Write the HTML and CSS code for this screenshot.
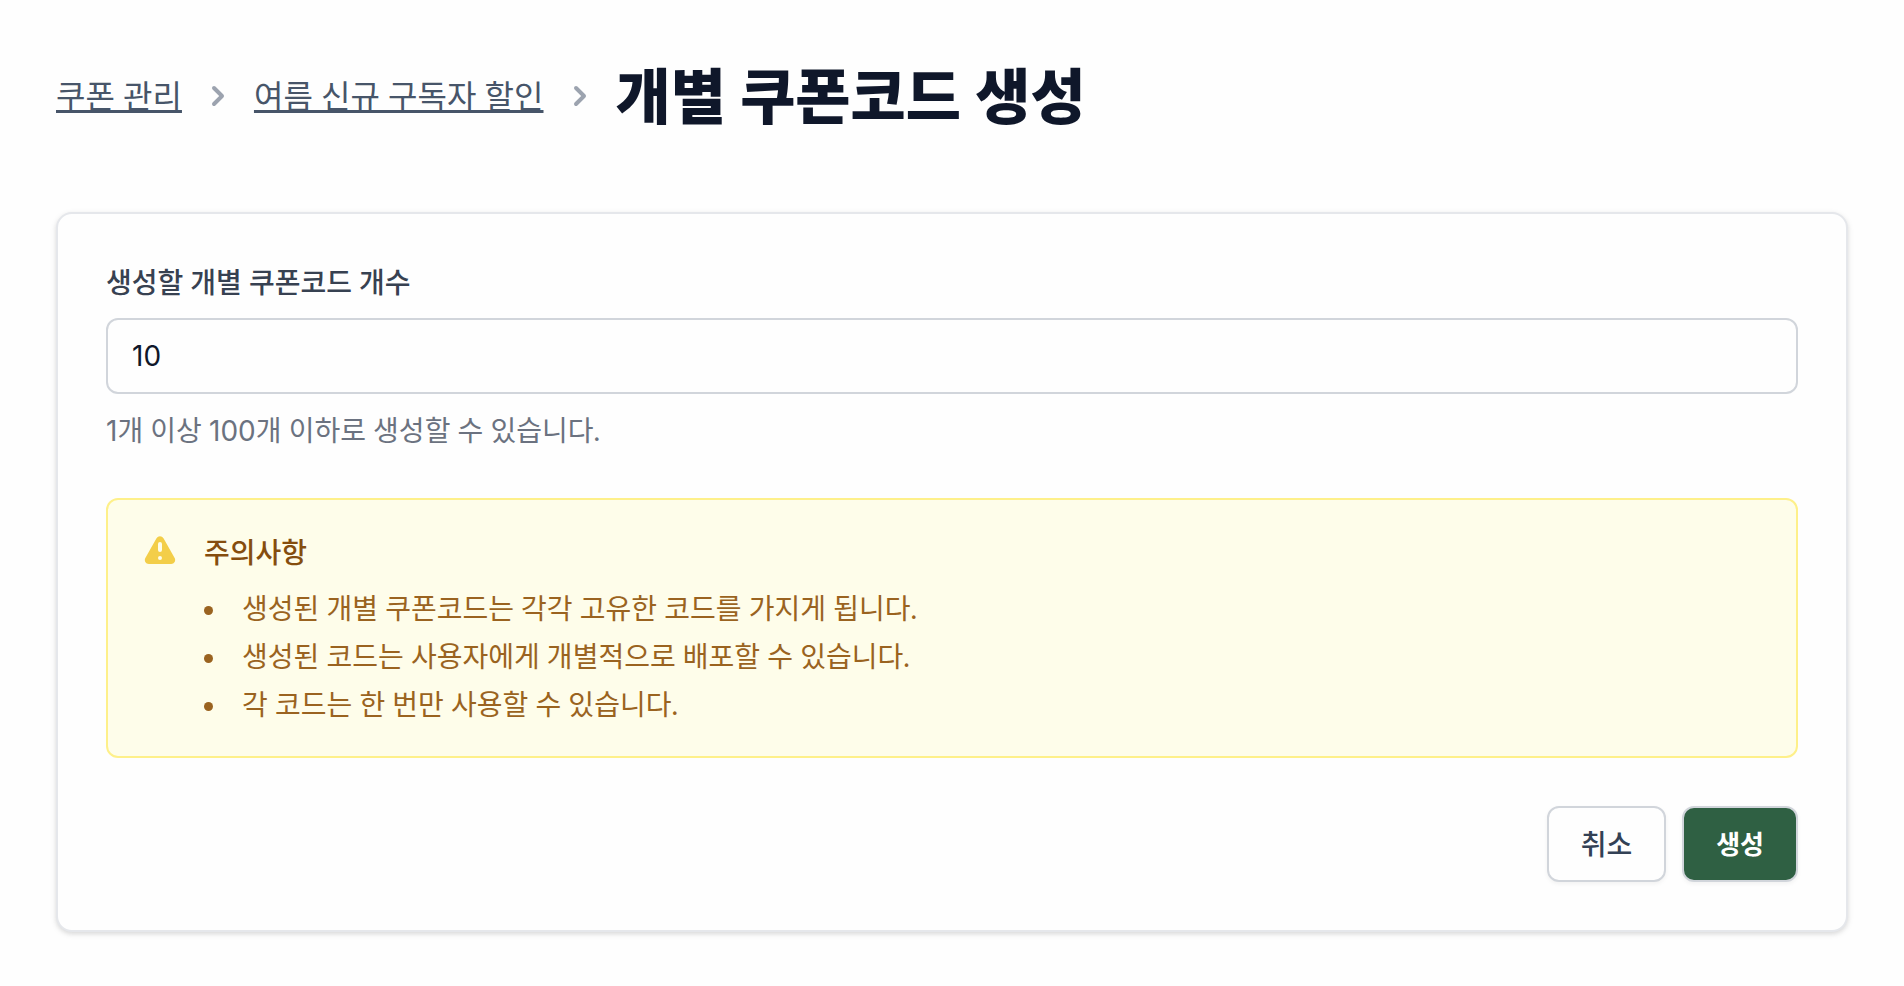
FILE: index.html
```html
<!DOCTYPE html>
<html lang="ko">
  <head>
    <meta charset="UTF-8" />
    <meta name="viewport" content="width=device-width, initial-scale=1.0" />
    <title>개별 쿠폰코드 생성</title>
    <link rel="stylesheet" href="styles.css">
  </head>
  <body>
    <main class="page">
      <header class="page-header">
        <nav class="breadcrumb" aria-label="breadcrumb">
          <a href="#">쿠폰 관리</a>
          <svg class="chevron" viewBox="0 0 20 20" fill="currentColor" aria-hidden="true">
            <path fill-rule="evenodd" clip-rule="evenodd" d="M7.293 14.707a1 1 0 010-1.414L10.586 10 7.293 6.707a1 1 0 011.414-1.414l4 4a1 1 0 010 1.414l-4 4a1 1 0 01-1.414 0z" />
          </svg>
          <a href="#">여름 신규 구독자 할인</a>
          <svg class="chevron" viewBox="0 0 20 20" fill="currentColor" aria-hidden="true">
            <path fill-rule="evenodd" clip-rule="evenodd" d="M7.293 14.707a1 1 0 010-1.414L10.586 10 7.293 6.707a1 1 0 011.414-1.414l4 4a1 1 0 010 1.414l-4 4a1 1 0 01-1.414 0z" />
          </svg>
        </nav>
        <h1>개별 쿠폰코드 생성</h1>
      </header>

      <form class="card">
        <div class="field">
          <label for="count">생성할 개별 쿠폰코드 개수</label>
          <input type="number" id="count" name="count" min="1" max="100" value="10" aria-describedby="count-help" />
          <p class="help" id="count-help"><span class="num">1</span>개 이상 <span class="num">100</span>개 이하로 생성할 수 있습니다.</p>
        </div>

        <div class="notice">
          <svg class="notice-icon" viewBox="0 0 20 20" fill="currentColor" aria-hidden="true">
            <path fill-rule="evenodd" clip-rule="evenodd" d="M8.257 3.099c.765-1.36 2.722-1.36 3.486 0l5.58 9.92c.75 1.334-.213 2.98-1.742 2.98H4.42c-1.53 0-2.493-1.646-1.743-2.98l5.58-9.92zM11 13a1 1 0 11-2 0 1 1 0 012 0zm-1-8a1 1 0 00-1 1v3a1 1 0 002 0V6a1 1 0 00-1-1z" />
          </svg>
          <div>
            <h2>주의사항</h2>
            <ul>
              <li>생성된 개별 쿠폰코드는 각각 고유한 코드를 가지게 됩니다.</li>
              <li>생성된 코드는 사용자에게 개별적으로 배포할 수 있습니다.</li>
              <li>각 코드는 한 번만 사용할 수 있습니다.</li>
            </ul>
          </div>
        </div>

        <div class="actions">
          <button type="button" class="btn">취소</button>
          <button type="submit" class="btn btn-primary">생성</button>
        </div>
      </form>
    </main>
  </body>
</html>
```
FILE: styles.css
```css
:root {
  --border: #d1d5db;
  --card-border: #e5e7eb;
  --primary: #2f6043;
  --radius: 12px;
}

* {
  box-sizing: border-box;
}

body {
  margin: 0;
  background-color: #fefefe;
  color: #0f172a;
  font-family: Lato, "Noto Sans CJK KR", sans-serif;
  font-size: 28px;
  line-height: 40px;
}

h1,
h2,
p,
ul {
  margin: 0;
}

.page {
  padding: 60px 56px 54px;
}

.page-header {
  display: flex;
  flex-wrap: wrap;
  align-items: center;
  gap: 16px;
  margin-bottom: 80px;
}

.breadcrumb {
  display: flex;
  align-items: center;
  gap: 16px;
}

.breadcrumb a {
  color: #475569;
  font-size: 32px;
  line-height: 48px;
  text-decoration: underline;
  text-decoration-thickness: 3px;
  text-decoration-skip-ink: none;
}

.chevron {
  width: 40px;
  height: 40px;
  color: #9ca3af;
}

h1 {
  font-size: 60px;
  font-weight: 900;
  line-height: 72px;
}

.card {
  padding: 48px;
  border: 2px solid var(--card-border);
  border-radius: 16px;
  background-color: #fefefe;
  box-shadow: 0 2px 6px rgba(0, 0, 0, 0.1), 0 2px 4px rgba(0, 0, 0, 0.06);
}

.field label {
  display: block;
  margin-bottom: 16px;
  color: #374151;
  font-weight: 500;
}

.field input {
  display: block;
  width: 100%;
  height: 76px;
  padding: 16px 24px;
  border: 2px solid var(--border);
  border-radius: var(--radius);
  background-color: #fefefe;
  color: #0f172a;
  font-family: Inter, sans-serif;
  font-size: 28px;
  appearance: textfield;
}

.help {
  margin-top: 16px;
  color: #6b7280;
}

.num {
  font-family: Inter, sans-serif;
  line-height: 1;
}

.notice {
  display: flex;
  gap: 24px;
  margin-top: 48px;
  padding: 32px;
  border: 2px solid #fef08a;
  border-radius: var(--radius);
  background-color: #fefdea;
}

.notice-icon {
  flex-shrink: 0;
  width: 40px;
  height: 40px;
  color: #f3ce49;
}

.notice h2 {
  color: #854d0e;
  font-size: 28px;
  font-weight: 500;
  line-height: 40px;
}

.notice ul {
  display: grid;
  gap: 8px;
  margin-top: 16px;
  padding: 0;
  color: #9a6320;
  list-style: disc inside;
}

.actions {
  display: flex;
  justify-content: flex-end;
  gap: 16px;
  margin-top: 48px;
}

.btn {
  height: 76px;
  padding: 0 32px;
  border: 2px solid var(--border);
  border-radius: var(--radius);
  background-color: #fefefe;
  color: #334155;
  font-family: inherit;
  font-size: 28px;
  font-weight: 500;
  line-height: 40px;
  box-shadow: 0 2px 4px rgba(0, 0, 0, 0.05);
  cursor: pointer;
}

.btn-primary {
  background-color: var(--primary);
  color: #fff;
  font-size: 26px;
  font-weight: 700;
}
```
